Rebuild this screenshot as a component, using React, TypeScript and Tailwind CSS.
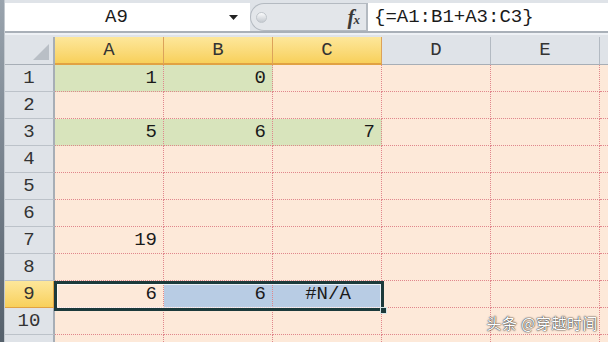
import React from 'react';

const cols = ['A', 'B', 'C', 'D', 'E'];
const selectedCols = ['A', 'B', 'C'];

const values: Record<number, Record<string, string>> = {
  1: { A: '1', B: '0' },
  3: { A: '5', B: '6', C: '7' },
  7: { A: '19' },
  9: { A: '6', B: '6', C: '#N/A' },
};

const green: Record<number, string[]> = {
  1: ['A', 'B'],
  3: ['A', 'B', 'C'],
};

const mono = { fontFamily: '"Liberation Mono", "DejaVu Sans Mono", monospace' };

function cellBg(row: number, col: string) {
  if (green[row]?.includes(col)) return 'bg-[#d8e4bc]';
  if (row === 9 && (col === 'B' || col === 'C')) return 'bg-[#b8cce4]';
  return 'bg-[#fde9d9]';
}

export default function App() {
  const rows = Array.from({ length: 11 }, (_, i) => i + 1);

  return (
    <div className="flex w-[608px] h-[342px] overflow-hidden bg-[#fde9d9] text-[#1a1a1a]" style={mono}>
      {/* left window edge */}
      <div className="w-[5px] shrink-0 bg-gradient-to-b from-[#9aa4ae] to-[#56616c] border-r border-[#c3c9cf]" />

      <div className="flex-1 flex flex-col min-w-0 min-h-0">
        {/* formula bar */}
        <div className="h-[37px] shrink-0 bg-[#dfe3e8] pt-[3px] flex flex-col">
          <div className="h-[28px] flex items-stretch">
            <div className="w-[245px] bg-white flex items-center relative">
              <span className="flex-1 text-center text-[19px] pr-[22px]">A9</span>
              <svg width="9" height="5" viewBox="0 0 9 5" className="absolute right-[12px] top-[12px]">
                <polygon points="0,0 9,0 4.5,5" fill="#222" />
              </svg>
            </div>
            <div className="w-[116px] flex items-center rounded-l-full border border-r-0 border-[#b4bac1] bg-[#e3e6ea] relative">
              <div className="ml-[5px] w-[11px] h-[11px] rounded-full bg-gradient-to-b from-[#fafbfc] to-[#c5cad0] border border-[#c0c5cb]" />
              <span
                className="absolute right-[6px] top-[0px] text-[21px] leading-[26px] italic font-bold text-[#3a3a3a]"
                style={{ fontFamily: '"Liberation Serif", serif' }}
              >
                f<span className="text-[13px] -ml-[1px]">x</span>
              </span>
            </div>
            <div className="w-[2px] bg-[#b4bac1]" />
            <div className="flex-1 bg-white flex items-center pl-[6px] text-[19px]">{'{=A1:B1+A3:C3}'}</div>
          </div>
          <div className="h-[2px] bg-[#a9b0b8]" />
          <div className="h-[2px] bg-[#eef1f5]" />
        </div>

        {/* sheet */}
        <div className="relative flex-1 min-h-0">
          <div className="grid grid-cols-[50px_repeat(5,109px)_1fr]">
            {/* header row */}
            <div className="h-[28px] bg-[#dfe3e8] border-r-2 border-b border-[#a7aeb6] flex items-end justify-end pr-[4px] pb-[4px]">
              <svg width="16" height="16" viewBox="0 0 16 16">
                <polygon points="16,0 16,16 0,16" fill="#b9bfc6" />
              </svg>
            </div>
            {cols.map((c) => {
              const sel = selectedCols.includes(c);
              return (
                <div
                  key={c}
                  className={
                    'h-[28px] flex items-center justify-center text-[19px] text-[#333] border-r ' +
                    (sel
                      ? 'bg-gradient-to-b from-[#fde79a] to-[#f8d05a] border-b-2 border-b-[#e1a243] border-r-[#dca25a]'
                      : 'bg-[#dfe3e8] border-b border-b-[#a7aeb6] border-r-[#b3bac2]')
                  }
                >
                  {c}
                </div>
              );
            })}
            <div className="h-[28px] bg-[#dfe3e8] border-b border-[#a7aeb6]" />

            {rows.map((r) => (
              <React.Fragment key={r}>
                <div
                  className={
                    'h-[27px] flex items-center justify-center text-[19px] text-[#333] border-r-2 border-b ' +
                    (r === 9
                      ? 'bg-gradient-to-b from-[#fde79a] to-[#f8d05a] border-r-[#e1a243] border-b-[#e1a243]'
                      : 'bg-[#dfe3e8] border-r-[#a7aeb6] border-b-[#bcc2c9]')
                  }
                >
                  {r <= 10 ? r : ''}
                </div>
                {cols.map((c) => {
                  const v = values[r]?.[c];
                  const isErr = v?.startsWith('#');
                  return (
                    <div
                      key={c}
                      className={
                        'h-[27px] flex items-center text-[19px] border-r border-b border-dotted border-[#e0868c] ' +
                        (isErr ? 'justify-center pl-[2px] ' : 'justify-end pr-[6px] ') +
                        cellBg(r, c)
                      }
                    >
                      {v}
                    </div>
                  );
                })}
                <div className="h-[27px] bg-[#fde9d9] border-b border-dotted border-[#e0868c]" />
              </React.Fragment>
            ))}
          </div>

          {/* selection A9:C9 */}
          <div className="absolute left-[49px] top-[244px] w-[330px] h-[30px] border-[3px] border-[#1c3a3b] pointer-events-none">
            <div className="w-full h-full border border-white/70" />
            <div className="absolute -right-[6px] -bottom-[6px] w-[7px] h-[7px] bg-[#1c3a3b] border border-[#d9e6e6]" />
          </div>

          {/* watermark */}
          <div
            className="absolute right-[10px] top-[275px] text-[15px] leading-[22px] text-white tracking-[0.5px] [text-shadow:0_0_2px_#333,0_0_1px_#000]"
            style={{ fontFamily: '"Noto Sans CJK SC", "Noto Sans", sans-serif' }}
          >
            头条 @穿越时间
          </div>
        </div>
      </div>
    </div>
  );
}
